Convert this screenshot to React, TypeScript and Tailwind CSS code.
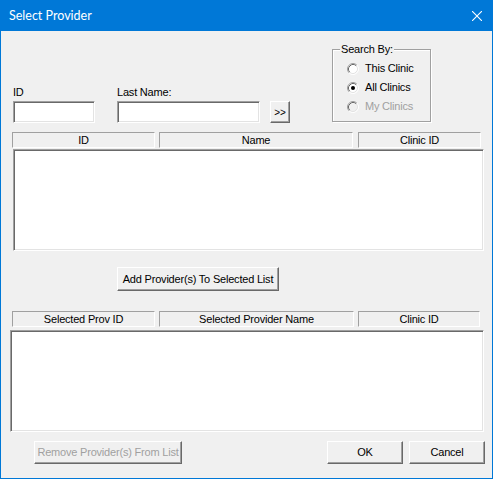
import React from "react";

const sunken =
  "bg-white border border-t-[#a0a0a0] border-l-[#a0a0a0] border-b-white border-r-white shadow-[inset_1px_1px_0_#696969,inset_-1px_-1px_0_#e3e3e3]";
const raised =
  "bg-[#f0f0f0] border border-t-white border-l-white border-b-[#696969] border-r-[#696969] shadow-[inset_-1px_-1px_0_#a0a0a0] flex items-center justify-center";
const header =
  "h-[16px] border border-t-[#a0a0a0] border-l-[#a0a0a0] border-b-white border-r-white flex items-center justify-center leading-none";

function Radio({ checked, disabled, label }: { checked?: boolean; disabled?: boolean; label: string }) {
  return (
    <div className="h-[19px] flex items-center">
      <svg width="12" height="12" viewBox="0 0 12 12">
        <circle cx="6" cy="6" r="5" fill={disabled ? "#f0f0f0" : "#ffffff"} />
        <path d="M2.11 9.89 A5.5 5.5 0 0 1 9.89 2.11" fill="none" stroke="#a0a0a0" />
        <path d="M9.89 2.11 A5.5 5.5 0 0 1 2.11 9.89" fill="none" stroke="#ffffff" />
        <path d="M2.82 9.18 A4.5 4.5 0 0 1 9.18 2.82" fill="none" stroke="#696969" />
        <path d="M9.18 2.82 A4.5 4.5 0 0 1 2.82 9.18" fill="none" stroke="#e3e3e3" />
        {checked && <circle cx="6" cy="6" r="2" fill="#000" />}
      </svg>
      <span className={`ml-[6px] ${disabled ? "text-[#a0a0a0]" : "text-black"}`}>{label}</span>
    </div>
  );
}

export default function App() {
  return (
    <div className="w-[493px] h-[479px] border border-[#0078d7] bg-[#f0f0f0] flex flex-col font-['Liberation_Sans',Arial,sans-serif] text-[11px] tracking-[-0.2px] text-black">
      <div className="h-[30px] bg-[#0078d7] flex items-center justify-between pl-[8px] pr-[10px]">
        <span className="text-white text-[12.5px] tracking-normal font-['Lato',sans-serif]">Select Provider</span>
        <svg width="10" height="10" viewBox="0 0 10 10">
          <path d="M0 0 L10 10 M10 0 L0 10" stroke="#fff" strokeWidth="1.1" />
        </svg>
      </div>

      <div className="flex h-[101px] items-start">
        <div className="ml-[12px] pt-[54px] flex flex-col">
          <span className="h-[14px] leading-[14px]">ID</span>
          <div className={`${sunken} mt-[2px] w-[82px] h-[22px]`} />
        </div>
        <div className="ml-[22px] pt-[54px] flex flex-col">
          <span className="h-[14px] leading-[14px]">Last Name:</span>
          <div className={`${sunken} mt-[2px] w-[143px] h-[22px]`} />
        </div>
        <div className={`${raised} ml-[10px] mt-[70px] w-[20px] h-[22px] text-[10px]`}>&gt;&gt;</div>
        <div className="relative ml-[42px] mt-[18px] w-[99px] h-[73px] border border-[#a0a0a0] shadow-[inset_1px_1px_0_#fff,1px_1px_0_#fff] pl-[14px] pt-[9px]">
          <span className="absolute -top-[8px] left-[7px] px-[1px] bg-[#f0f0f0] leading-[14px]">Search By:</span>
          <Radio label="This Clinic" />
          <Radio checked label="All Clinics" />
          <Radio disabled label="My Clinics" />
        </div>
      </div>

      <div className="flex">
        <div className={`${header} ml-[11px] w-[143px]`}>ID</div>
        <div className={`${header} ml-[4px] w-[194px]`}>Name</div>
        <div className={`${header} ml-[5px] w-[123px]`}>Clinic ID</div>
      </div>
      <div className={`${sunken} mt-[1px] ml-[12px] w-[471px] h-[102px]`} />

      <div className={`${raised} mt-[16px] ml-[116px] w-[162px] h-[24px]`}>Add Provider(s) To Selected List</div>

      <div className="flex mt-[20px]">
        <div className={`${header} ml-[11px] w-[143px]`}>Selected Prov ID</div>
        <div className={`${header} ml-[4px] w-[195px]`}>Selected Provider Name</div>
        <div className={`${header} ml-[4px] w-[122px]`}>Clinic ID</div>
      </div>
      <div className={`${sunken} mt-[3px] ml-[9px] w-[474px] h-[102px]`} />

      <div className="flex mt-[9px]">
        <div className={`${raised} ml-[33px] w-[148px] h-[23px] text-[#a0a0a0]`}>Remove Provider(s) From List</div>
        <div className={`${raised} ml-[145px] w-[76px] h-[23px]`}>OK</div>
        <div className={`${raised} ml-[6px] w-[76px] h-[23px]`}>Cancel</div>
      </div>
    </div>
  );
}
